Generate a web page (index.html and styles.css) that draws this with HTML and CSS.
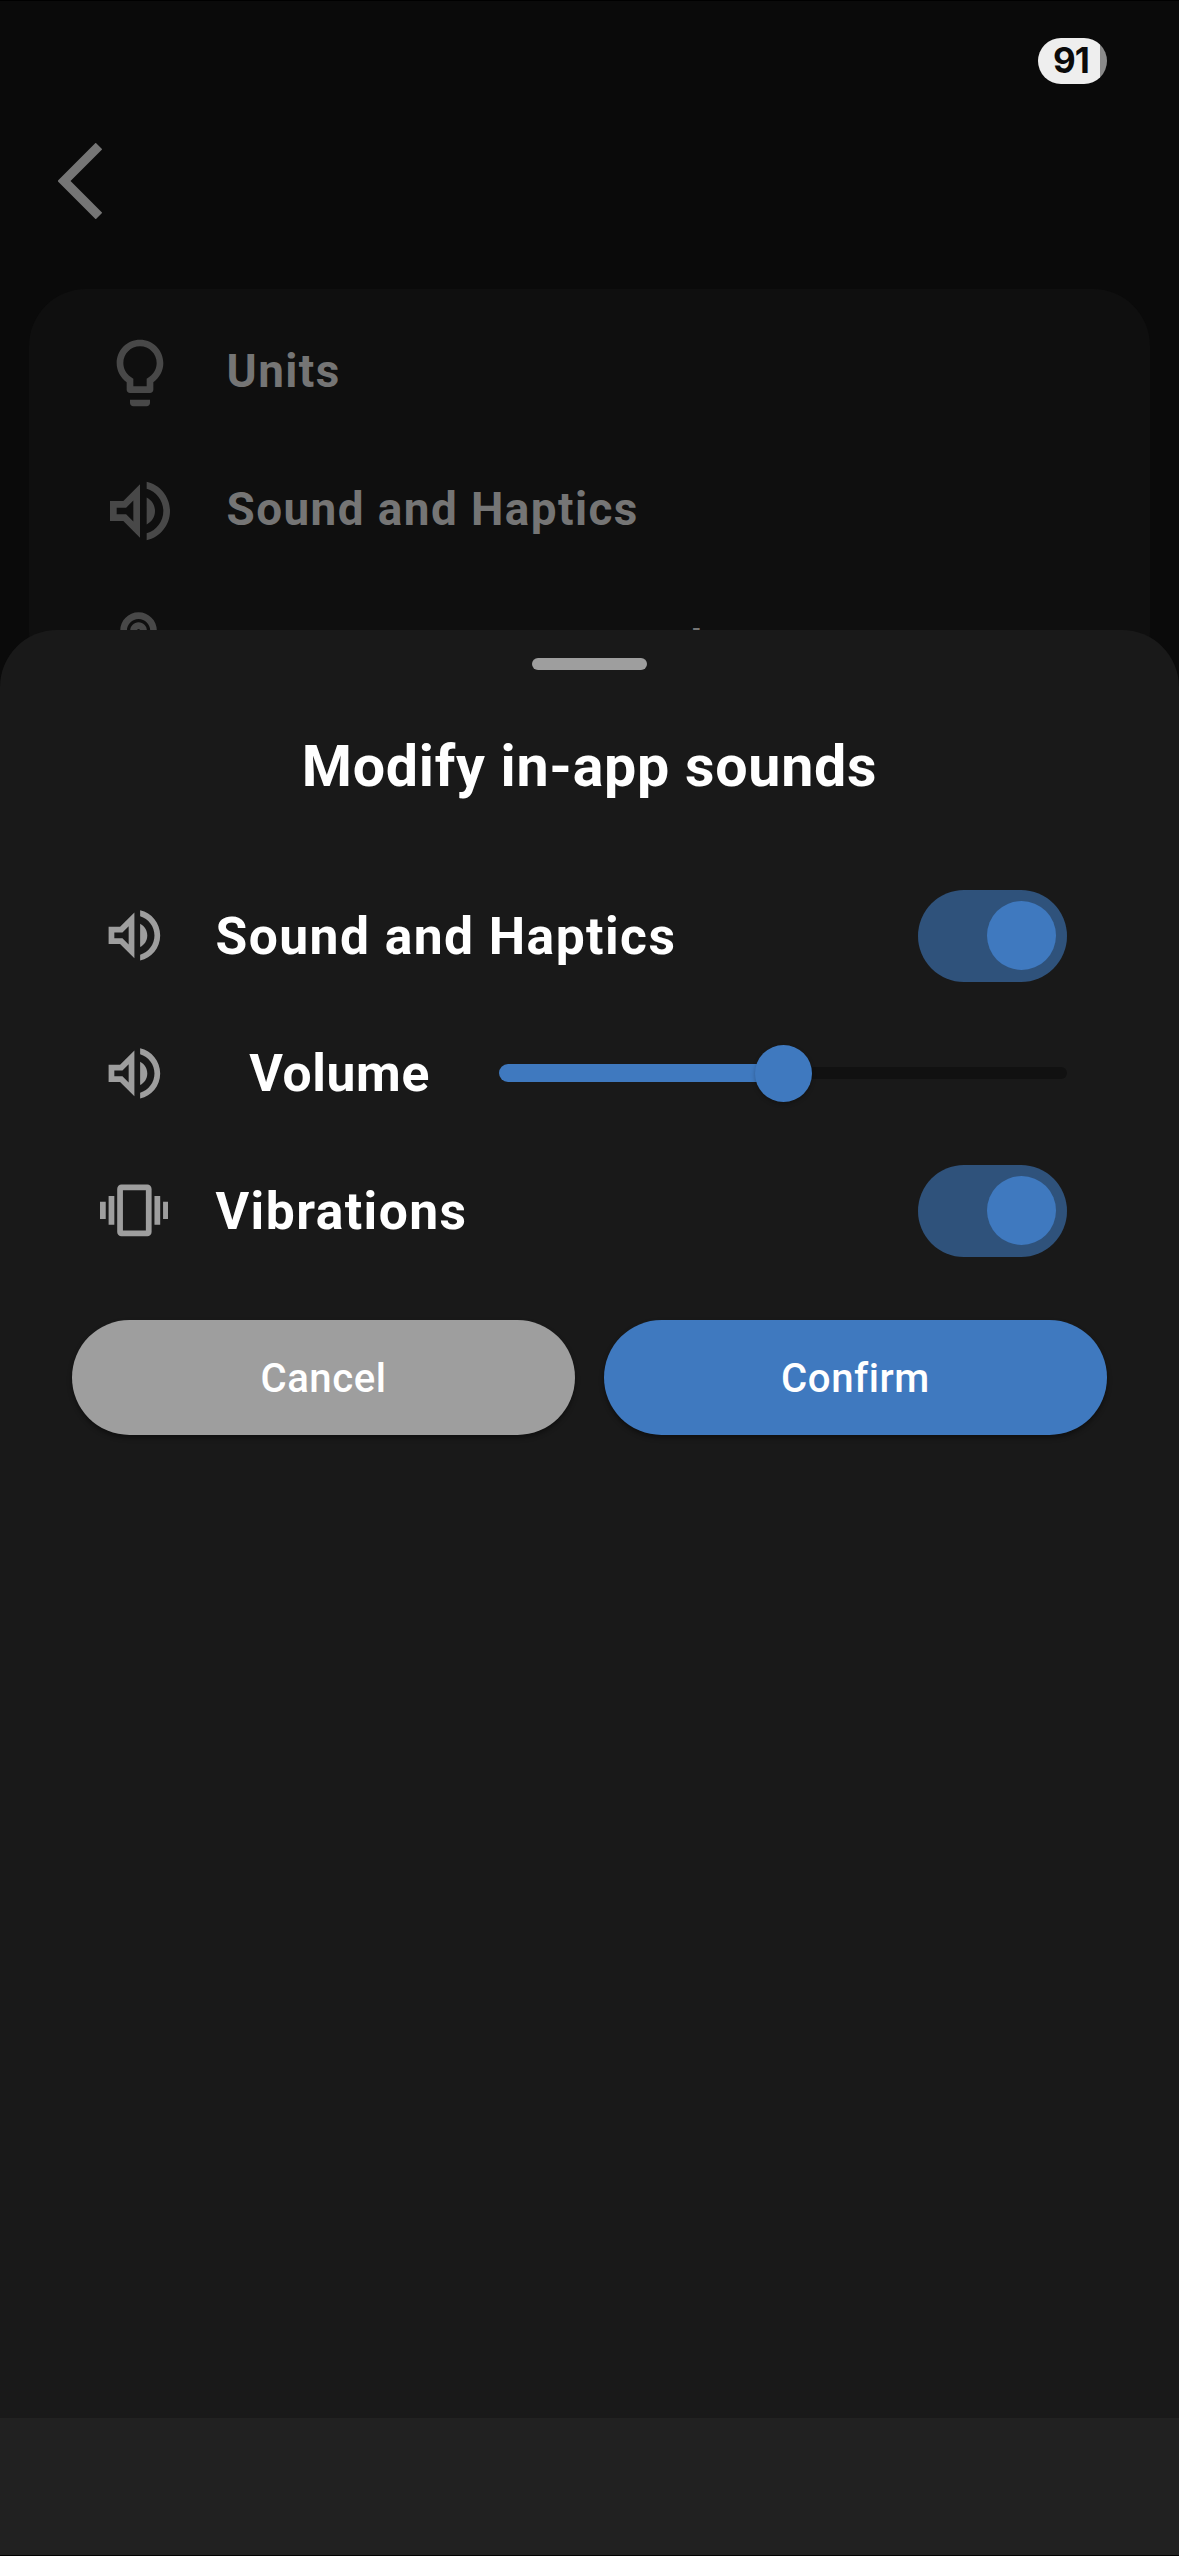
FILE: index.html
```html
<!DOCTYPE html>
<html lang="en">
<head>
<meta charset="utf-8">
<title>Settings</title>
<link rel="stylesheet" href="styles.css">
</head>
<body>
<svg class="defs" aria-hidden="true">
  <symbol id="volume" viewBox="0 0 24 24"><path d="M3 9v6h4l5 5V4L7 9H3zm7-.17v6.34L7.83 13H5v-2h2.83L10 8.83zM16.5 12c0-1.77-1.02-3.29-2.5-4.03v8.05c1.48-.73 2.5-2.25 2.5-4.02zM14 3.23v2.06c2.89.86 5 3.54 5 6.71s-2.11 5.85-5 6.71v2.06c4.01-.91 7-4.49 7-8.77 0-4.28-2.99-7.86-7-8.77z"/></symbol>
</svg>
<div class="screen">
  <main class="page">
    <header class="status"><span class="battery">91</span></header>
    <nav class="nav">
      <svg class="back" viewBox="0 0 44 76"><path d="M41 3L6 38l35 35" fill="none" stroke="currentColor" stroke-width="9.3"/></svg>
    </nav>
    <ul class="list">
      <li class="item"><svg class="icon" viewBox="0 0 24 24"><path d="M9 21c0 .55.45 1 1 1h4c.55 0 1-.45 1-1v-1H9v1zm3-19C8.14 2 5 5.14 5 9c0 2.38 1.19 4.47 3 5.74V17c0 .55.45 1 1 1h6c.55 0 1-.45 1-1v-2.26c1.81-1.27 3-3.36 3-5.74 0-3.86-3.14-7-7-7zm2.85 11.1l-.85.6V16h-4v-2.3l-.85-.6C7.8 12.16 7 10.63 7 9c0-2.76 2.24-5 5-5s5 2.24 5 5c0 1.63-.8 3.16-2.15 4.1z"/></svg><span class="name">Units</span></li>
      <li class="item"><svg class="icon"><use href="#volume"/></svg><span class="name">Sound and Haptics</span></li>
      <li class="item"><svg class="icon" viewBox="0 0 24 24"><path d="M18.19 12.44l-3.24-1.62c1.29-1 2.12-2.56 2.12-4.32 0-3.03-2.47-5.5-5.5-5.5s-5.5 2.47-5.5 5.5c0 2.13 1.22 3.98 3 4.89v3.26c-2.15-.46-2.02-.44-2.26-.44-.53 0-1.03.21-1.41.59L4 16.22l5.09 5.09c.43.44 1.03.69 1.65.69h6.3c.98 0 1.81-.7 1.97-1.67l.8-4.71c.22-1.3-.43-2.58-1.62-3.18zM8.07 6.5c0-1.93 1.57-3.5 3.5-3.5s3.5 1.57 3.5 3.5c0 .95-.38 1.81-1 2.44V6.5c0-1.38-1.12-2.5-2.5-2.5s-2.5 1.12-2.5 2.5v2.44c-.62-.63-1-1.49-1-2.44zm4 0v2h-1v-2c0-.28.22-.5.5-.5s.5.22.5.5z"/></svg><span class="name name-wide">Measurement controls</span></li>
    </ul>
  </main>
  <section class="sheet">
    <div class="handle"></div>
    <h1 class="title">Modify in-app sounds</h1>
    <div class="options">
      <div class="option"><svg class="glyph"><use href="#volume"/></svg><span class="label">Sound and Haptics</span><span class="switch"><i class="knob"></i></span></div>
      <div class="option option-volume"><svg class="glyph"><use href="#volume"/></svg><span class="label">Volume</span><span class="slider"><i class="fill"></i><i class="thumb"></i><i class="rest"></i></span></div>
      <div class="option"><svg class="glyph" viewBox="0 0 24 24"><path d="M0 15h2V9H0v6zm3 2h2V7H3v10zm19-8v6h2V9h-2zm-3 8h2V7h-2v10zM16.5 3h-9C6.67 3 6 3.67 6 4.5v15c0 .83.67 1.5 1.5 1.5h9c.83 0 1.5-.67 1.5-1.5v-15c0-.83-.67-1.5-1.5-1.5zM16 19H8V5h8v14z"/></svg><span class="label">Vibrations</span><span class="switch"><i class="knob"></i></span></div>
    </div>
    <div class="actions">
      <button class="button cancel">Cancel</button>
      <button class="button confirm">Confirm</button>
    </div>
  </section>
  <footer class="bottom"></footer>
</div>
</body>
</html>
```
FILE: styles.css
```css
* { box-sizing: border-box; }
body {
  margin: 0;
  background: #000;
  font-family: Roboto, "Liberation Sans", sans-serif;
}
.defs { display: none; }
.screen {
  width: 1179px;
  height: 2556px;
  border-top: 1px solid #000;
  border-bottom: 1px solid #000;
  display: flex;
  flex-direction: column;
  overflow: hidden;
  background: #0a0a0a;
}
.page { height: 628.5px; flex: none; overflow: visible; }
.status {
  height: 83px;
  padding: 37px 72px 0 0;
  display: flex;
  justify-content: flex-end;
}
.battery {
  width: 69px;
  height: 46px;
  padding-right: 3px;
  border-radius: 23px;
  background: linear-gradient(90deg, #eee 62px, #8b8b8b 62px);
  color: #0a0a0a;
  font: 700 35px/44px Inter, sans-serif;
  letter-spacing: -1px;
  text-align: center;
}
.nav { height: 205px; padding: 59px 0 0 58px; }
.back { display: block; width: 44px; height: 76px; color: #757575; }
.list {
  list-style: none;
  height: 400px;
  margin: 0 29px;
  padding: 14.5px 70.5px;
  border-radius: 57px;
  background: #0f0f0f;
}
.item {
  height: 138px;
  display: flex;
  align-items: center;
  gap: 47px;
  font-size: 45.87px;
  font-weight: 700;
  letter-spacing: 1.43px;
  color: #757575;
}
.icon { width: 80px; height: 80px; fill: #484848; }
.name { padding-bottom: 3px; }
.name-wide { word-spacing: 8px; }
.sheet {
  position: relative;
  flex: 1;
  padding: 28.5px 72px 0;
  border-radius: 57px 57px 0 0;
  background: #191919;
}
.handle {
  width: 115px;
  height: 12px;
  margin: 0 auto;
  border-radius: 6px;
  background: #9e9e9e;
}
.title {
  margin: 63px 0 0;
  font-size: 57.33px;
  line-height: 68px;
  font-weight: 700;
  letter-spacing: .74px;
  text-align: center;
  color: #fff;
}
.options { padding: 66px 40px 0 27.5px; }
.option {
  height: 137.5px;
  display: flex;
  align-items: center;
  color: #fff;
}
.glyph { width: 68.8px; height: 68.8px; fill: #9e9e9e; }
.label {
  margin-left: 47.2px;
  padding-top: 2px;
  font-size: 51.6px;
  font-weight: 700;
  letter-spacing: 1.43px;
}
.option-volume .label {
  margin-left: 81px;
  padding-top: 0;
  width: 249.7px;
  letter-spacing: .65px;
}
.switch {
  width: 149px;
  height: 92px;
  margin-left: auto;
  padding: 0 11.5px;
  border-radius: 46px;
  display: flex;
  align-items: center;
  justify-content: flex-end;
  background: #2f527b;
}
.knob { width: 69px; height: 69px; border-radius: 50%; background: #3f79bf; }
.slider { flex: 1; display: flex; align-items: center; }
.fill { flex: 1; height: 18px; margin-right: -4px; border-radius: 9px 0 0 9px; background: #3f79bf; }
.thumb {
  position: relative;
  width: 57px;
  height: 57px;
  border-radius: 50%;
  background: #3f79bf;
  box-shadow: 0 2px 4px rgba(0, 0, 0, .25);
}
.rest { width: 259px; height: 12px; margin-left: -4px; border-radius: 0 6px 6px 0; background: #111; }
.actions { margin-top: 40px; display: flex; gap: 29px; }
.button {
  flex: 1;
  height: 115px;
  border: 0;
  border-radius: 58px;
  color: #fff;
  font: 500 40.13px/115px Roboto, sans-serif;
  letter-spacing: .57px;
  box-shadow: 0 3px 5px rgba(0, 0, 0, .4);
}
.cancel { background: #9e9e9e; }
.confirm { background: #3f79bf; }
.bottom { height: 137px; flex: none; background: #212121; }
```
